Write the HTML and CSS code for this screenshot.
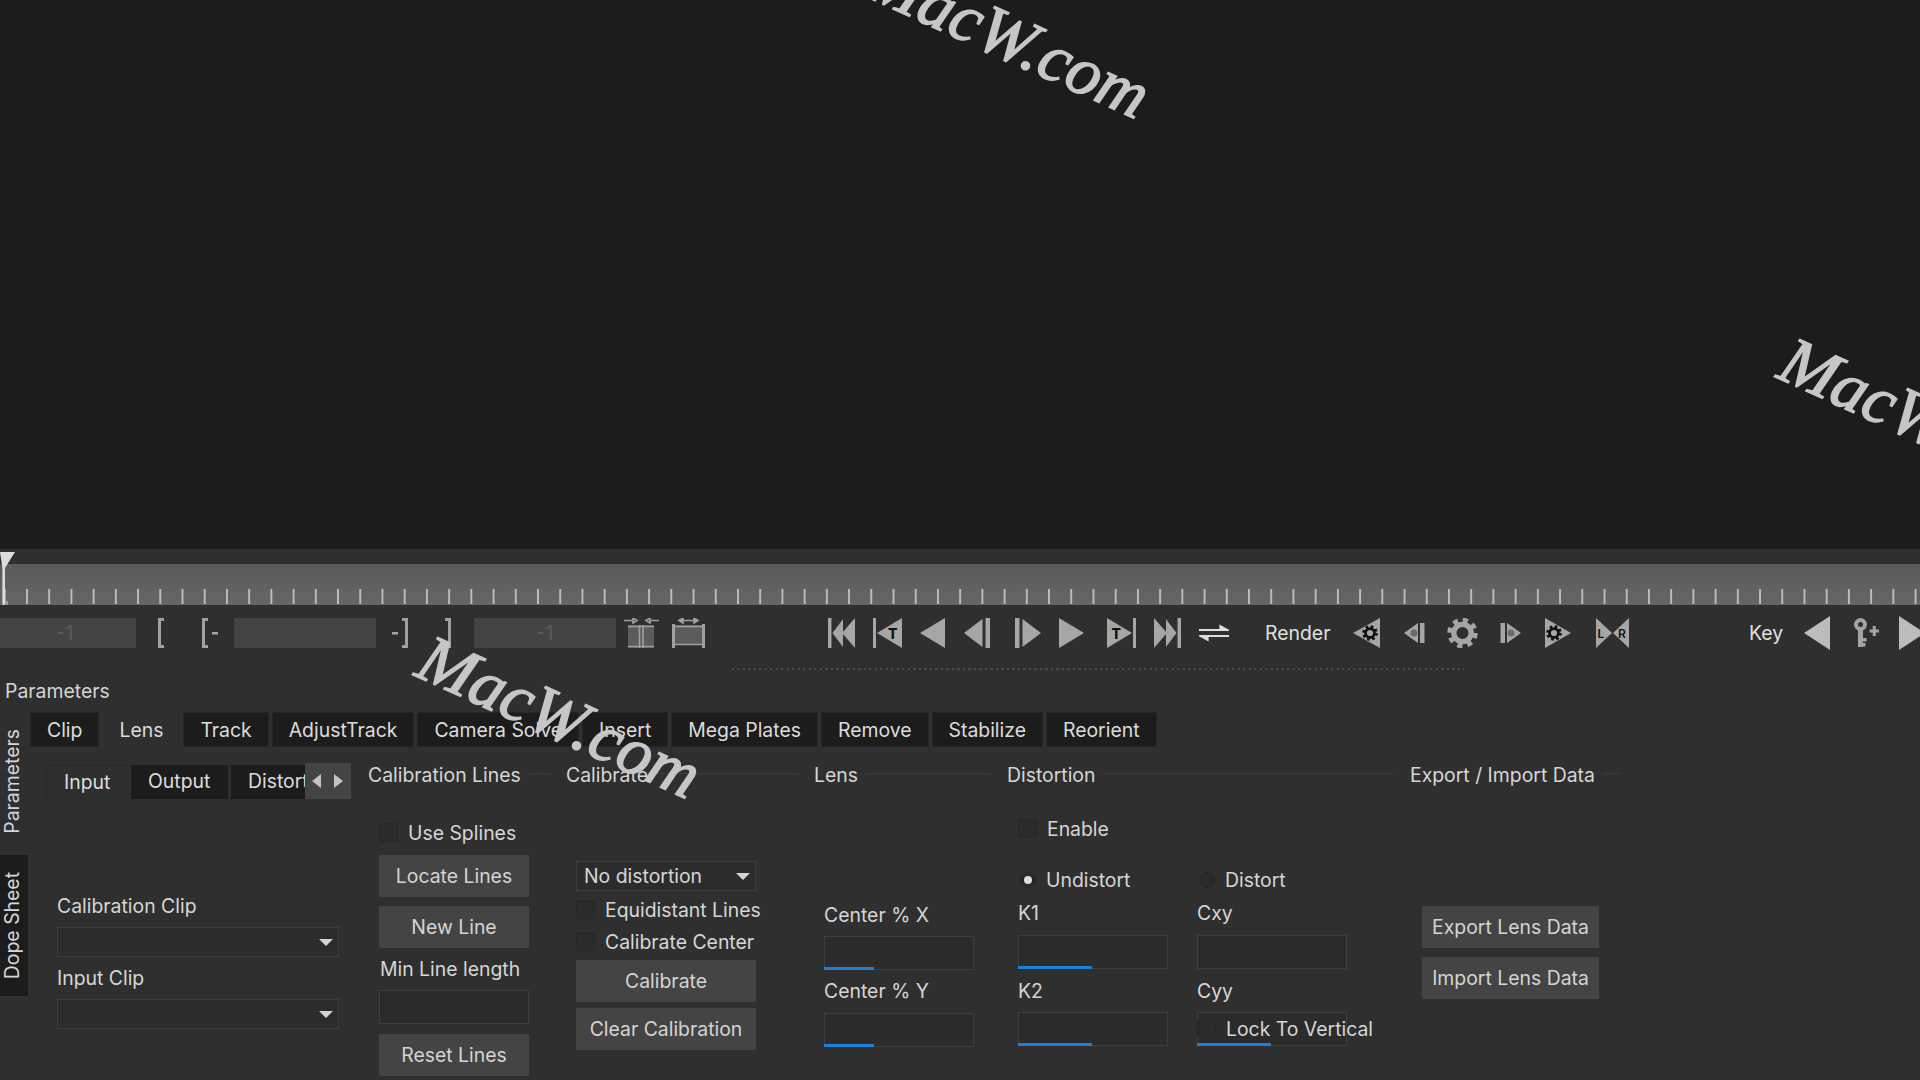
FILE: index.html
```html
<!DOCTYPE html>
<html lang="en">
<head>
  <meta charset="UTF-8">
  <title>Parameters</title>
  <link rel="stylesheet" href="styles.css">
</head>
<body>
  <svg width="0" height="0" class="defs">
    <defs>
      <g id="gear">
        <circle r="6.5" fill="none" stroke="currentColor" stroke-width="3.6" stroke-dasharray="2.6 2.5" transform="scale(1.18)"/>
        <circle r="5.6" fill="none" stroke="currentColor" stroke-width="3.4"/>
      </g>
    </defs>
  </svg>

  <div class="viewer"></div>

  <div class="timeline">
    <div class="timeline-top"></div>
    <div class="ruler"><div class="ticks"></div></div>
    <svg class="playhead" width="16" height="53" viewBox="0 0 16 53">
      <path d="M0 0H15L5 16V53H2.400V16Z" fill="#dcdcdc"/>
      <rect x="6" y="49" width="2" height="4" fill="#a0a0a0"/>
    </svg>
  </div>

  <div class="toolbar">
    <div class="frame-input ml-neg">-1</div>
    <svg class="icon ml-22" width="6" height="30" viewBox="0 0 6 30"><path d="M6 1.500H1.500V28.500H6" class="line"/></svg>
    <svg class="icon ml-38" width="16" height="30" viewBox="0 0 16 30"><path d="M6 1.500H1.500V28.500H6" class="line"/><rect x="10" y="14" width="6" height="2.500" class="fill"/></svg>
    <div class="frame-input ml-16"></div>
    <svg class="icon ml-16" width="16" height="30" viewBox="0 0 16 30"><path d="M10 1.500H14.500V28.500H10" class="line"/><rect x="0" y="14" width="6" height="2.500" class="fill"/></svg>
    <svg class="icon ml-37" width="6" height="30" viewBox="0 0 6 30"><path d="M0 1.500H4.500V28.500H0" class="line"/></svg>
    <div class="frame-input ml-23">-1</div>
    <svg class="icon ml-8" width="35" height="30" viewBox="0 0 35 30">
      <rect x="4" y="7" width="26" height="23" fill="#5c5c5c"/>
      <path d="M4 8.500H30M4 28.500H30" class="line thin"/>
      <path d="M15.500 7V30M19 7V30" class="line thin"/>
      <path d="M0 2.500H9M13 2.500L9 0V5ZM35 2.500H26M22 2.500L26 0V5Z" class="line thin"/>
    </svg>
    <svg class="icon ml-13" width="33" height="30" viewBox="0 0 33 30">
      <rect x="2" y="7" width="29" height="20" fill="#5c5c5c"/>
      <path d="M1.500 6V30M31.500 6V30" class="line"/>
      <path d="M1 8.500H32M1 26.500H32" class="line thin"/>
      <path d="M7 2.500H26M7 2.500L11 0V5ZM26 2.500L22 0V5Z" class="line thin"/>
    </svg>

    <svg class="icon ml-123" width="27" height="30" viewBox="0 0 27 30"><path d="M0 0H3.500V30H0ZM4.500 15L15 1V29ZM14 15L27 0V30Z" class="fill"/></svg>
    <svg class="icon ml-18" width="29" height="30" viewBox="0 0 29 30"><path d="M0 0H3V30H0ZM4 15L29 0V30Z" class="fill"/><text x="15" y="21" class="badge">T</text></svg>
    <svg class="icon ml-18" width="25" height="30" viewBox="0 0 25 30"><path d="M0 15L25 0V30Z" class="fill"/></svg>
    <svg class="icon ml-19" width="26" height="30" viewBox="0 0 26 30"><path d="M0 15L18.500 1V29ZM21.500 0H26V30H21.500Z" class="fill"/></svg>
    <svg class="icon ml-25" width="26" height="30" viewBox="0 0 26 30"><path d="M26 15L7.500 1V29ZM4.500 0H0V30H4.500Z" class="fill"/></svg>
    <svg class="icon ml-18" width="25" height="30" viewBox="0 0 25 30"><path d="M25 15L0 0V30Z" class="fill"/></svg>
    <svg class="icon ml-23" width="29" height="30" viewBox="0 0 29 30"><path d="M29 0H26V30H29ZM25 15L0 0V30Z" class="fill"/><text x="4.500" y="21" class="badge">T</text></svg>
    <svg class="icon ml-17" width="28" height="30" viewBox="0 0 28 30"><path d="M28 0H24.500V30H28ZM23.500 15L13 1V29ZM14 15L1 0V30Z" class="fill"/></svg>
    <svg class="icon ml-18" width="30" height="30" viewBox="0 0 30 30">
      <path d="M0 11.500H21V7.500L30 12.500H0ZM30 18.500H9V22.500L0 17.500H30Z" fill="#dedede" stroke="#dedede" stroke-width="1.200"/>
    </svg>

    <div class="toolbar-label render-label">Render</div>

    <svg class="icon ml-24" width="27" height="30" viewBox="0 0 27 30"><path d="M0 15L27 0V30Z" class="fill"/><use href="#gear" class="gear-dark" transform="translate(17 15) scale(0.8)"/></svg>
    <svg class="icon ml-24" width="21" height="30" viewBox="0 0 21 30"><path d="M0 15L14 5V25ZM16 5H20.500V25H16Z" class="fill"/><circle cx="10" cy="15" r="3.500" fill="#6a6a6a"/></svg>
    <svg class="icon ml-22" width="31" height="30" viewBox="-15.500 -15 31 30"><use href="#gear" class="gear-light" transform="scale(1.55)"/></svg>
    <svg class="icon ml-21" width="22" height="30" viewBox="0 0 22 30"><path d="M22 15L8 5V25ZM6 5H1.500V25H6Z" class="fill"/><circle cx="12" cy="15" r="3.500" fill="#6a6a6a"/></svg>
    <svg class="icon ml-24" width="26" height="30" viewBox="0 0 26 30"><path d="M26 15L0 0V30Z" class="fill"/><use href="#gear" class="gear-dark" transform="translate(9 15) scale(0.8)"/></svg>
    <svg class="icon ml-25" width="33" height="30" viewBox="0 0 33 30"><path d="M0 0L16 15L0 30ZM33 0L17 15L33 30Z" class="fill"/><text x="1.500" y="20" class="badge small">L</text><text x="22" y="20" class="badge small">R</text></svg>

    <div class="toolbar-label key-label">Key</div>

    <svg class="icon tall ml-22" width="26" height="34" viewBox="0 0 26 34"><path d="M0 17L26 0V34Z" class="fill-light"/></svg>
    <svg class="icon ml-24" width="25" height="30" viewBox="0 0 25 30">
      <circle cx="6.500" cy="6.500" r="4.500" fill="none" stroke="#a4a4a4" stroke-width="4"/>
      <path d="M4 10H9V29H4ZM9 20H12.500V23.500H9ZM9 25H11.500V28.500H9ZM15.500 11.500H25V14.500H15.500ZM18.700 8H21.800V18H18.700Z" fill="#a4a4a4"/>
    </svg>
    <svg class="icon tall ml-20" width="26" height="34" viewBox="0 0 26 34"><path d="M26 17L0 0V34Z" class="fill-light"/></svg>
  </div>

  <div class="dots"></div>

  <div class="panel-title">Parameters</div>

  <div class="params">
    <div class="vtabs">
      <div class="vtab params-tab"><span>Parameters</span></div>
      <div class="vtab dope-tab"><span>Dope Sheet</span></div>
    </div>

    <div class="params-main">
      <div class="tabs">
        <div class="tab">Clip</div>
        <div class="tab active">Lens</div>
        <div class="tab">Track</div>
        <div class="tab">AdjustTrack</div>
        <div class="tab">Camera Solve</div>
        <div class="tab">Insert</div>
        <div class="tab">Mega Plates</div>
        <div class="tab">Remove</div>
        <div class="tab">Stabilize</div>
        <div class="tab">Reorient</div>
      </div>

      <div class="lens-page">
        <div class="input-pane">
          <div class="subtabs">
            <div class="subtab active input-tab">Input</div>
            <div class="subtab output-tab">Output</div>
            <div class="subtab distort-tab">Distortion</div>
            <div class="scroller">
              <span class="arrow arrow-left"></span>
              <span class="arrow arrow-right"></span>
            </div>
          </div>
          <div class="clip-fields">
            <div class="label mt-95">Calibration Clip</div>
            <div class="select clip-select mt-9"></div>
            <div class="label mt-9">Input Clip</div>
            <div class="select clip-select mt-9"></div>
          </div>
        </div>

        <section class="group group-lines">
          <div class="group-head"><span>Calibration Lines</span><i></i></div>
          <div class="group-body pad-11 col-150">
            <div class="check mt-36"><b></b>Use Splines</div>
            <div class="btn mt-13">Locate Lines</div>
            <div class="btn mt-9">New Line</div>
            <div class="label mt-9 nudge">Min Line length</div>
            <div class="field mt-9"></div>
            <div class="btn mt-10">Reset Lines</div>
          </div>
        </section>

        <section class="group group-calibrate">
          <div class="group-head"><span>Calibrate</span><i></i></div>
          <div class="group-body pad-10 col-180">
            <div class="select mt-74">No distortion</div>
            <div class="check mt-9"><b></b>Equidistant Lines</div>
            <div class="check mt-13"><b></b>Calibrate Center</div>
            <div class="btn mt-9">Calibrate</div>
            <div class="btn mt-6">Clear Calibration</div>
          </div>
        </section>

        <section class="group group-lens">
          <div class="group-head"><span>Lens</span><i></i></div>
          <div class="group-body pad-10 col-150">
            <div class="label mt-116">Center % X</div>
            <div class="field mt-9"><em class="bar-short"></em></div>
            <div class="label mt-9">Center % Y</div>
            <div class="field mt-10"><em class="bar-short"></em></div>
          </div>
        </section>

        <section class="group group-distortion">
          <div class="group-head"><span>Distortion</span><i></i></div>
          <div class="group-body pad-11">
            <div class="check mt-32"><b></b>Enable</div>
            <div class="distort-grid mt-32">
              <div class="radio on"><b></b>Undistort</div>
              <div class="radio"><b></b>Distort</div>
            </div>
            <div class="distort-grid mt-12">
              <div>
                <div class="label">K1</div>
                <div class="field mt-10"><em class="bar-long"></em></div>
                <div class="label mt-10">K2</div>
                <div class="field mt-9"><em class="bar-long"></em></div>
              </div>
              <div>
                <div class="label">Cxy</div>
                <div class="field mt-10"></div>
                <div class="label mt-10">Cyy</div>
                <div class="field mt-9">
                  <em class="bar-long"></em>
                  <div class="check lock-check"><b></b>Lock To Vertical</div>
                </div>
              </div>
            </div>
          </div>
        </section>

        <section class="group group-export">
          <div class="group-head"><span>Export / Import Data</span><i></i></div>
          <div class="group-body pad-12 col-177">
            <div class="btn mt-119">Export Lens Data</div>
            <div class="btn mt-9">Import Lens Data</div>
          </div>
        </section>
      </div>
    </div>
  </div>

  <!-- watermark sits over everything -->
  <svg class="watermark" width="1920" height="1080" viewBox="0 0 1920 1080">
    <text transform="translate(862 -5) rotate(24.4)">MacW.com</text>
    <text transform="translate(1775 377) rotate(24.4)">MacW.com</text>
    <text transform="translate(413 675) rotate(24.4)">MacW.com</text>
  </svg>
</body>
</html>
```

FILE: styles.css
```css
* {
  box-sizing: border-box;
}

html, body {
  margin: 0;
  padding: 0;
  width: 1920px;
  height: 1080px;
  overflow: hidden;
}

body {
  position: relative;
  background: #2f2f2f;
  color: #d6d6d6;
  font-family: Inter, "Noto Sans", sans-serif;
  font-size: 19.4px;
}

.defs {
  position: absolute;
}

.viewer {
  height: 549px;
  background: #1c1c1c;
}

/* timeline */
.timeline {
  position: relative;
  height: 56px;
}

.timeline-top {
  height: 15px;
  background: #2f2f2f;
}

.ruler {
  height: 41px;
  padding-top: 25px;
  background: linear-gradient(#5a5a5a, #666);
}

.ticks {
  height: 15px;
  background-image: linear-gradient(90deg, #bcbcbc 2px, transparent 2px);
  background-size: 22.22px 15px;
  background-position: 26px 0;
  background-repeat: repeat-x;
}

.playhead {
  position: absolute;
  left: 0;
  top: 3px;
}

/* toolbar */
.toolbar {
  display: flex;
  align-items: center;
  height: 30px;
  margin-top: 13px;
}

.icon {
  flex: none;
  height: 30px;
}

.icon.tall {
  height: 34px;
}

.fill {
  fill: #a6a6a6;
}

.fill-light {
  fill: #bcbcbc;
}

.line {
  fill: none;
  stroke: #a0a0a0;
  stroke-width: 3;
}

.line.thin {
  stroke-width: 1.6;
}

.badge {
  font: 800 14px Inter, sans-serif;
  fill: #111;
}

.badge.small {
  font-size: 12px;
  font-weight: 600;
}

.gear-dark {
  color: #111;
}

.gear-light {
  color: #a6a6a6;
}

.frame-input {
  flex: none;
  width: 142px;
  height: 30px;
  line-height: 30px;
  text-align: center;
  background: #444;
  color: #5c5c5c;
}

.toolbar-label {
  flex: none;
  color: #e0e0e0;
  white-space: nowrap;
}

.render-label {
  width: 64px;
  margin-left: 36px;
}

.key-label {
  width: 33px;
  margin-left: 120px;
}

.ml-neg { margin-left: -6px; }
.ml-8 { margin-left: 8px; }
.ml-13 { margin-left: 13px; }
.ml-16 { margin-left: 16px; }
.ml-17 { margin-left: 17px; }
.ml-18 { margin-left: 18px; }
.ml-19 { margin-left: 19px; }
.ml-20 { margin-left: 20px; }
.ml-21 { margin-left: 21px; }
.ml-22 { margin-left: 22px; }
.ml-23 { margin-left: 23px; }
.ml-24 { margin-left: 24px; }
.ml-25 { margin-left: 25px; }
.ml-37 { margin-left: 37px; }
.ml-38 { margin-left: 38px; }
.ml-123 { margin-left: 123px; }

.dots {
  width: 732px;
  height: 2px;
  margin: 20px 0 0 732px;
  background-image: repeating-linear-gradient(90deg, #4c4c4c 0 2px, transparent 2px 5.5px);
}

.panel-title {
  height: 24px;
  line-height: 24px;
  margin-top: 9px;
  padding-left: 5px;
}

/* parameters area */
.params {
  display: flex;
  margin-top: 9px;
}

.vtabs {
  flex: none;
  width: 28px;
  margin-right: 2px;
  padding-top: 1px;
}

.vtab {
  display: flex;
  justify-content: center;
  align-items: center;
  width: 28px;
  padding-right: 5px;
}

.vtab span {
  writing-mode: vertical-rl;
  transform: rotate(180deg);
}

.params-tab {
  height: 137px;
}

.dope-tab {
  height: 141px;
  margin-top: 5px;
  background: #1c1c1c;
}

.params-main {
  flex: 1;
}

.tabs {
  display: flex;
  gap: 3px;
  height: 35px;
}

.tab {
  height: 35px;
  line-height: 34px;
  padding: 0 16px;
  background: #1c1c1c;
  border: 1px solid #262626;
  color: #dcdcdc;
  white-space: nowrap;
}

.tab.active {
  background: #2f2f2f;
  border-color: #2f2f2f;
}

.lens-page {
  display: flex;
  padding-left: 16px;
}

.input-pane {
  flex: none;
  width: 305px;
  margin-right: 17px;
  padding-top: 16px;
}

.subtabs {
  position: relative;
  display: flex;
  gap: 3px;
  height: 36px;
  padding-top: 2px;
}

.subtab {
  height: 34px;
  line-height: 33px;
  padding: 0 17px;
  background: #1c1c1c;
  overflow: hidden;
  white-space: nowrap;
  color: #dcdcdc;
}

.subtab.active {
  background: #2f2f2f;
  border-left: 1px solid #292929;
  border-top: 1px solid #292929;
}

.input-tab {
  width: 82px;
}

.output-tab {
  width: 97px;
}

.distort-tab {
  width: 74px;
  padding-right: 0;
}

.scroller {
  position: absolute;
  right: 0;
  top: 0;
  display: flex;
  width: 46px;
  height: 36px;
  background: #444;
}

.arrow {
  flex: 1;
  position: relative;
}

.arrow::after {
  content: "";
  position: absolute;
  top: 11px;
  border: 7px solid transparent;
  border-width: 7px 9px;
}

.arrow-left::after {
  left: 7px;
  border-right-color: #c4c4c4;
  border-left-width: 0;
}

.arrow-right::after {
  left: 6px;
  border-left-color: #c4c4c4;
  border-right-width: 0;
}

.clip-fields {
  padding-left: 11px;
}

.label {
  height: 24px;
  line-height: 24px;
  white-space: nowrap;
}

.nudge {
  padding-left: 1px;
}

.select {
  position: relative;
  height: 30px;
  line-height: 28px;
  padding-left: 7px;
  border: 1px solid #3e3e3e;
  background: #2c2c2c;
}

.select::after {
  content: "";
  position: absolute;
  right: 5px;
  top: 11px;
  border: 7px solid transparent;
  border-top: 7px solid #d4d4d4;
  border-bottom-width: 0;
}

.clip-select {
  width: 282px;
}

/* groups */
.group {
  flex: none;
  margin-right: 16px;
  padding-top: 16px;
}

.group-lines { width: 182px; }
.group-calibrate { width: 232px; }
.group-lens { width: 177px; }
.group-distortion { width: 387px; }
.group-export { width: 209px; }

.group-head {
  display: flex;
  height: 24px;
  line-height: 24px;
}

.group-head span {
  flex: none;
}

.group-head i {
  flex: 1;
  height: 1px;
  margin: 10px 0 0 8px;
  background: #3d3d3d;
}

.pad-10 { padding-left: 10px; }
.pad-11 { padding-left: 11px; }
.pad-12 { padding-left: 12px; }

.col-150 > * { width: 150px; }
.col-180 > * { width: 180px; }
.col-177 > * { width: 177px; }

.btn {
  height: 42px;
  line-height: 42px;
  text-align: center;
  background: #444;
  color: #d4d4d4;
  white-space: nowrap;
}

.check, .radio {
  display: flex;
  align-items: center;
  gap: 10px;
  height: 19px;
  white-space: nowrap;
}

.check b {
  flex: none;
  width: 19px;
  height: 19px;
  background: #2b2b2b;
  border: 1px solid #272727;
  border-radius: 2px;
}

.radio b {
  position: relative;
  flex: none;
  width: 16px;
  height: 16px;
  margin-left: 2px;
  border-radius: 50%;
  background: #292929;
  border: 1px solid #262626;
}

.radio.on b::after {
  content: "";
  position: absolute;
  left: 3px;
  top: 3px;
  width: 8px;
  height: 8px;
  border-radius: 50%;
  background: #dcdcdc;
}

.field {
  position: relative;
  width: 150px;
  height: 34px;
  background: #2b2b2b;
  border: 1px solid #3e3e3e;
}

.field em {
  position: absolute;
  left: -1px;
  bottom: -1px;
  height: 3px;
  background: #1a80d8;
}

.bar-short { width: 50px; }
.bar-long { width: 74px; }

.distort-grid {
  display: grid;
  grid-template-columns: 150px 150px;
  column-gap: 29px;
}

.lock-check {
  position: absolute;
  left: -1px;
  top: 6px;
}

.mt-6 { margin-top: 6px; }
.mt-9 { margin-top: 9px; }
.mt-10 { margin-top: 10px; }
.mt-12 { margin-top: 12px; }
.mt-13 { margin-top: 13px; }
.mt-32 { margin-top: 32px; }
.mt-36 { margin-top: 36px; }
.mt-74 { margin-top: 74px; }
.mt-95 { margin-top: 95px; }
.mt-116 { margin-top: 116px; }
.mt-119 { margin-top: 119px; }

/* watermark */
.watermark {
  position: absolute;
  left: 0;
  top: 0;
}

.watermark text {
  font-family: "Liberation Serif", serif;
  font-style: italic;
  font-size: 68px;
  fill: #c6c6c6;
  stroke: #c6c6c6;
  stroke-width: 1.5;
}
```
